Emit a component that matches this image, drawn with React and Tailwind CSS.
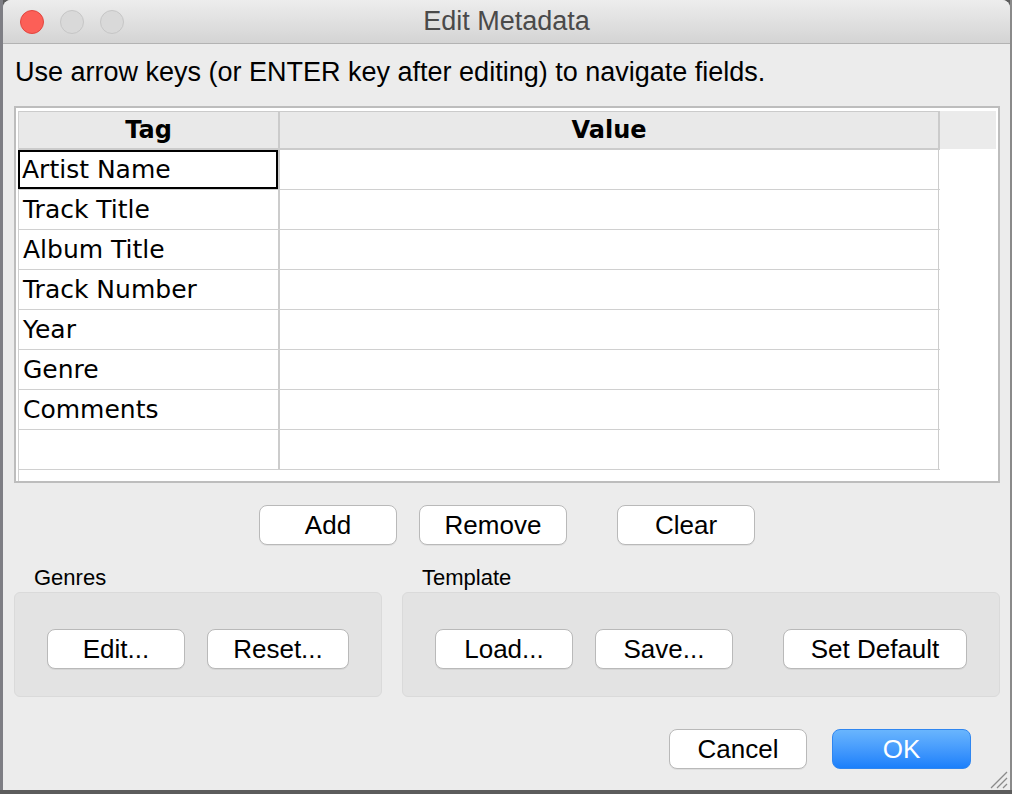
import React from 'react';

const rows = ['Artist Name', 'Track Title', 'Album Title', 'Track Number', 'Year', 'Genre', 'Comments', ''];

function MacButton({ children, className = '' }) {
  return (
    <button
      className={`h-[40px] rounded-[8px] border border-[#b9b9b9] bg-white text-[26px] leading-none text-black shadow-[0_1px_0_rgba(0,0,0,0.06)] font-['Liberation_Sans',Arial,sans-serif] ${className}`}
    >
      {children}
    </button>
  );
}

function Light({ red }) {
  return (
    <div
      className={
        red
          ? 'w-[24px] h-[24px] rounded-full bg-[#fc5f57] border border-[#e2463f]'
          : 'w-[24px] h-[24px] rounded-full bg-[#d9d9d9] border border-[#c6c6c6]'
      }
    />
  );
}

export default function App() {
  return (
    <div className="w-[1012px] h-[794px] bg-[#5c5c5c] overflow-hidden font-['Liberation_Sans',Arial,sans-serif]">
      <div className="flex h-[790px]">
        <div className="w-[3px] h-full bg-[#7e7e84]" />
        <div className="relative w-[1007px] h-full bg-[#ececec] rounded-t-[8px] flex flex-col">
          {/* title bar */}
          <div className="relative h-[44px] shrink-0 rounded-t-[8px] bg-gradient-to-b from-[#ededed] to-[#d4d4d4] border-b border-[#b3b3b3] flex items-center">
            <div className="flex items-center gap-[16px] pl-[17px]">
              <Light red />
              <Light />
              <Light />
            </div>
            <div className="absolute inset-0 flex items-center justify-center text-[27px] text-[#4a4a4a]">
              Edit Metadata
            </div>
          </div>

          <div className="pl-[11px] pr-[10px] flex flex-col">
            <p className="mt-[14px] h-[28px] leading-[28px] text-[27px] text-black whitespace-nowrap pl-[1px]">
              Use arrow keys (or ENTER key after editing) to navigate fields.
            </p>

            {/* table */}
            <div className="mt-[20px] h-[377px] border-2 border-[#bdbdbd] bg-white pl-[2px] pt-[3px] flex font-['DejaVu_Sans',sans-serif]">
              <div className="w-[922px] border-l border-[#d0d0d0]">
                <div className="flex h-[39px] border-t border-b-2 border-[#cbcbcb] bg-[#e9e9e9] text-[24px] font-bold text-black">
                  <div className="w-[261px] border-r-2 border-[#cbcbcb] flex items-center justify-center">Tag</div>
                  <div className="w-[660px] border-r-2 border-[#cbcbcb] flex items-center justify-center">Value</div>
                </div>
                {rows.map((r, i) => (
                  <div key={i} className="flex h-[40px] border-b border-[#d0d0d0] text-[25px] text-black">
                    <div className="w-[261px] border-r-2 border-[#cccccc] flex items-center">
                      {i === 0 ? (
                        <div className="-ml-px w-[260px] h-full border-2 border-black flex items-center pl-[2px]">{r}</div>
                      ) : (
                        <span className="pl-[4px]">{r}</span>
                      )}
                    </div>
                    <div className="w-[659px] border-r border-[#cccccc]" />
                  </div>
                ))}
              </div>
              <div className="w-[56px] h-[38px] bg-[#ebebeb]" />
            </div>

            {/* add / remove / clear */}
            <div className="mt-[22px] flex pl-[245px]">
              <MacButton className="w-[138px]">Add</MacButton>
              <MacButton className="w-[148px] ml-[22px]">Remove</MacButton>
              <MacButton className="w-[138px] ml-[50px]">Clear</MacButton>
            </div>

            {/* groups */}
            <div className="mt-[20px] flex gap-[20px]">
              <div className="w-[368px] flex flex-col">
                <div className="h-[26px] leading-[26px] text-[22px] text-black pl-[20px]">Genres</div>
                <div className="mt-px h-[105px] rounded-[6px] bg-[#e3e3e3] border border-[#dadada] flex items-center pl-[32px] pt-[9px]">
                  <MacButton className="w-[138px]">Edit...</MacButton>
                  <MacButton className="w-[142px] ml-[22px]">Reset...</MacButton>
                </div>
              </div>
              <div className="w-[598px] flex flex-col">
                <div className="h-[26px] leading-[26px] text-[22px] text-black pl-[20px]">Template</div>
                <div className="mt-px h-[105px] rounded-[6px] bg-[#e3e3e3] border border-[#dadada] flex items-center pl-[32px] pt-[9px]">
                  <MacButton className="w-[138px]">Load...</MacButton>
                  <MacButton className="w-[138px] ml-[22px]">Save...</MacButton>
                  <MacButton className="w-[184px] ml-[50px]">Set Default</MacButton>
                </div>
              </div>
            </div>

            {/* cancel / ok */}
            <div className="mt-[32px] flex justify-end pr-[29px]">
              <MacButton className="w-[138px]">Cancel</MacButton>
              <button className="ml-[25px] w-[139px] h-[40px] rounded-[8px] border border-[#2f86f0] bg-gradient-to-b from-[#69b5fd] to-[#1a7ffb] text-white text-[26px] leading-none">
                OK
              </button>
            </div>
          </div>

          {/* resize grip */}
          <svg className="absolute right-[2px] bottom-[1px]" width="20" height="20" viewBox="0 0 20 20">
            <line x1="19" y1="3" x2="3" y2="19" stroke="#8a8a8a" strokeWidth="1.2" />
            <line x1="19" y1="9" x2="9" y2="19" stroke="#8a8a8a" strokeWidth="1.2" />
            <line x1="19" y1="15" x2="15" y2="19" stroke="#8a8a8a" strokeWidth="1.2" />
          </svg>
        </div>
        <div className="w-[2px] h-full bg-[#8a8a8a]" />
      </div>
    </div>
  );
}
